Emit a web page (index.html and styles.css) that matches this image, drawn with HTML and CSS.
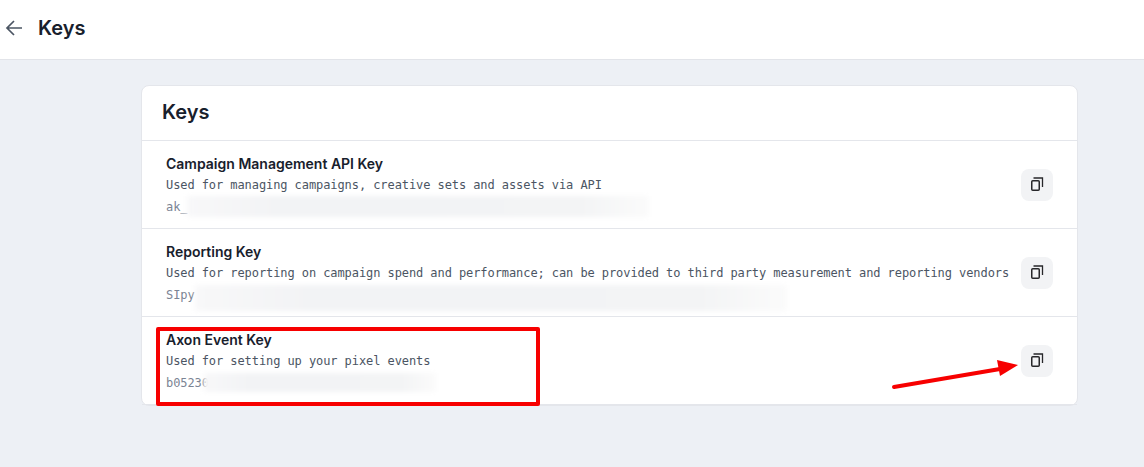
FILE: index.html
```html
<!DOCTYPE html>
<html lang="en">
<head>
    <meta charset="UTF-8">
    <meta name="viewport" content="width=device-width, initial-scale=1.0">
    <title>Keys</title>
    <link rel="stylesheet" href="styles.css">
</head>
<body>
    <header class="top-bar">
        <svg class="back-icon" width="20" height="20" viewBox="0 0 20 20" fill="none">
            <path d="M17 10H2M9 3L2 10L9 17" stroke="#4b5563" stroke-width="1.7"/>
        </svg>
        <h1 class="page-title">Keys</h1>
    </header>
    <main class="content">
        <section class="card">
            <h2 class="card-title">Keys</h2>
            <div class="key-row">
                <div class="key-info">
                    <div class="key-name">Campaign Management API Key</div>
                    <div class="key-desc">Used for managing campaigns, creative sets and assets via API</div>
                    <div class="key-value">ak_<span class="key-blur blur-api"></span></div>
                </div>
                <button class="copy-button">
                    <svg width="16" height="16" viewBox="0 0 16 16" fill="none"><rect x="2.75" y="3.75" width="7.5" height="9.5" rx="1" stroke="#27272a" stroke-width="1.5"/><path d="M4.5 1H13.5V10" stroke="#27272a" stroke-width="1.3"/></svg>
                </button>
            </div>
            <div class="key-row">
                <div class="key-info">
                    <div class="key-name">Reporting Key</div>
                    <div class="key-desc">Used for reporting on campaign spend and performance; can be provided to third party measurement and reporting vendors</div>
                    <div class="key-value">SIpy<span class="key-blur blur-reporting"></span></div>
                </div>
                <button class="copy-button">
                    <svg width="16" height="16" viewBox="0 0 16 16" fill="none"><rect x="2.75" y="3.75" width="7.5" height="9.5" rx="1" stroke="#27272a" stroke-width="1.5"/><path d="M4.5 1H13.5V10" stroke="#27272a" stroke-width="1.3"/></svg>
                </button>
            </div>
            <div class="key-row">
                <div class="key-info">
                    <div class="key-name">Axon Event Key</div>
                    <div class="key-desc">Used for setting up your pixel events</div>
                    <div class="key-value">b05230<span class="key-blur blur-axon"></span></div>
                </div>
                <button class="copy-button">
                    <svg width="16" height="16" viewBox="0 0 16 16" fill="none"><rect x="2.75" y="3.75" width="7.5" height="9.5" rx="1" stroke="#27272a" stroke-width="1.5"/><path d="M4.5 1H13.5V10" stroke="#27272a" stroke-width="1.3"/></svg>
                </button>
            </div>
            <div class="mark-box"></div>
            <svg class="mark-arrow" width="132" height="34" viewBox="0 0 132 34" fill="none">
                <path d="M4 29L110 11" stroke="#f70000" stroke-width="4" stroke-linecap="round"/>
                <path d="M107 2L128 7L110 18Z" fill="#f70000"/>
            </svg>
        </section>
    </main>
</body>
</html>
```

FILE: styles.css
```css
body, html {
    height: 100%;
    margin: 0;
    background-color: #edf0f5;
    font-family: 'Inter', 'Liberation Sans', sans-serif;
}
.top-bar {
    display: flex;
    align-items: center;
    box-sizing: border-box;
    height: 60px;
    padding: 0 0 4px 5px;
    background-color: #fff;
    border-bottom: 1px solid #e2e4e9;
}
.back-icon {
    display: block;
    margin-right: 13px;
}
.page-title {
    margin: 0;
    font-size: 20px;
    line-height: 28px;
    font-weight: 600;
    color: #18202c;
}
.content {
    padding: 25px 66px 0 141px;
}
.card {
    position: relative;
    background-color: #fff;
    border: 1px solid #e4e6eb;
    border-radius: 8px;
}
.card-title {
    margin: 0;
    height: 54px;
    padding-left: 20px;
    font-size: 20px;
    line-height: 52px;
    font-weight: 600;
    color: #18202c;
    border-bottom: 1px solid #e4e6eb;
}
.key-row {
    display: flex;
    align-items: center;
    justify-content: space-between;
    height: 87px;
    padding: 0 24px;
    border-bottom: 1px solid #e4e6eb;
}
.key-row:last-of-type {
    border-bottom: none;
}
.key-info {
    align-self: flex-start;
    padding-top: 13px;
}
.key-name {
    font-size: 14px;
    line-height: 20px;
    font-weight: 600;
    color: #18202c;
}
.key-desc {
    margin-top: 1px;
    font-family: 'DejaVu Sans Mono', 'Liberation Mono', monospace;
    font-size: 12px;
    line-height: 20px;
    letter-spacing: -0.08px;
    color: #4b5563;
    white-space: nowrap;
}
.key-value {
    display: flex;
    height: 20px;
    margin-top: 2px;
    font-family: 'DejaVu Sans Mono', 'Liberation Mono', monospace;
    font-size: 12px;
    line-height: 20px;
    letter-spacing: -0.08px;
    color: #7b8494;
}
.key-row:last-of-type .key-value {
    margin-top: 1px;
}
.key-blur {
    display: block;
    flex: none;
    background: linear-gradient(90deg, #f8f8f9, #f2f3f5 20%, #f3f4f5 85%, #fbfbfb);
    filter: blur(2px);
}
.blur-api {
    width: 462px;
    height: 21px;
    margin-top: -1px;
}
.blur-reporting {
    width: 592px;
    height: 26px;
}
.blur-axon {
    width: 232px;
    height: 19px;
    margin-left: -5px;
}
.copy-button {
    display: flex;
    align-items: center;
    justify-content: center;
    width: 32px;
    height: 32px;
    padding: 0;
    background-color: #f2f3f5;
    border: none;
    border-radius: 8px;
}
.mark-box {
    position: absolute;
    left: 14px;
    top: 241px;
    width: 376px;
    height: 71px;
    border: 4px solid #f70000;
    border-radius: 2px;
}
.mark-arrow {
    position: absolute;
    left: 748px;
    top: 272px;
}
```
